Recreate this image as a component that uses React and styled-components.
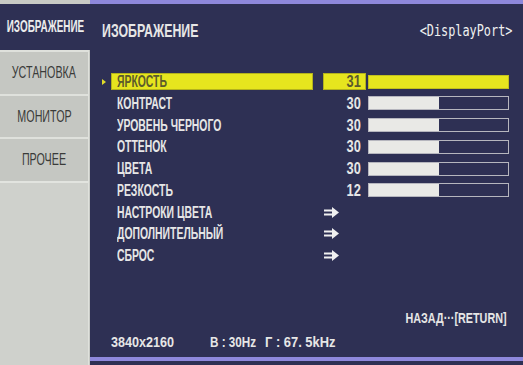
import React from "react";
import styled, { createGlobalStyle } from "styled-components";

const GlobalStyle = createGlobalStyle`
  html, body {
    margin: 0;
    padding: 0;
    background: #2e3054;
  }
  body {
    font-family: "Liberation Sans", Arial, sans-serif;
    font-weight: bold;
  }
`;

// OSD font is very condensed; squeeze a regular sans horizontally
const Txt = styled.span`
  display: inline-block;
  white-space: nowrap;
  transform: scaleX(${(p) => p.$sx || 0.65});
  transform-origin: ${(p) => p.$o || "left"} center;
`;

const Screen = styled.div`
  display: flex;
  width: 523px;
  height: 365px;
  overflow: hidden;
`;

const Sidebar = styled.div`
  width: 90px;
  display: flex;
  flex-direction: column;
  background: #c8cac5;
  padding-top: 4px;
  box-sizing: border-box;
`;

const Tab = styled.div`
  height: ${(p) => p.$h}px;
  display: flex;
  align-items: center;
  justify-content: center;
  font-size: 16px;
  font-weight: ${(p) => (p.$active ? "bold" : "normal")};
  color: ${(p) => (p.$active ? "#ececec" : "#3a3b39")};
  background: ${(p) => (p.$active ? "#2e3054" : "#c5c7c2")};
  border-top: ${(p) => (p.$active ? "none" : "2px solid #dfe1dc")};
  border-right: ${(p) => (p.$active ? "none" : "1px solid #dfe1dc")};
  margin-right: ${(p) => (p.$active ? "0" : "1px")};
  box-sizing: border-box;
`;

const SidebarFill = styled.div`
  flex: 1;
  background: #cfd1cc;
  border-top: 2px solid #e2e4df;
  border-right: 1px solid #dfe1dc;
  margin-right: 1px;
`;

const Panel = styled.div`
  flex: 1;
  display: flex;
  flex-direction: column;
  background: #2e3054;
  border-top: 4px solid #8e88dc;
  height: 361px;
  border-bottom: 4px solid #8e88dc;
  box-sizing: border-box;
  margin-bottom: 4px;
  padding: 18px 12px 0 12px;
  color: #e6e6e6;
`;

const Header = styled.div`
  display: flex;
  justify-content: space-between;
  align-items: flex-start;
  height: 51px;
`;

const Title = styled.div`
  font-size: 19px;
  line-height: 18px;
`;

const Source = styled.div`
  font-family: "DejaVu Sans Mono", "Liberation Mono", monospace;
  font-weight: normal;
  font-size: 15px;
  line-height: 18px;
  margin-right: -1px;
  color: #f0f0f0;
`;

const List = styled.div`
  display: flex;
  flex-direction: column;
  gap: 4.75px;
`;

const Row = styled.div`
  display: grid;
  grid-template-columns: 9px 202px 53px 143px;
  height: 17px;
  align-items: center;
`;

const Marker = styled.div`
  width: 0;
  height: 0;
  border-top: 3.5px solid transparent;
  border-bottom: 3.5px solid transparent;
  border-left: 4px solid #e0dc2a;
  visibility: ${(p) => (p.$show ? "visible" : "hidden")};
`;

const Label = styled.div`
  height: 17px;
  line-height: 15px;
  font-size: 16px;
  padding-left: 5px;
  box-sizing: border-box;
  color: ${(p) => (p.$sel ? "#5c5b2c" : "#e6e6e6")};
  background: ${(p) => (p.$sel ? "#e6e51e" : "transparent")};
  border: 1px solid ${(p) => (p.$sel ? "#b3b21c" : "transparent")};
`;

const Value = styled.div`
  margin-left: 10px;
  height: 17px;
  line-height: 15px;
  font-size: 16px;
  padding-right: 4px;
  box-sizing: border-box;
  color: ${(p) => (p.$sel ? "#5c5b2c" : "#e6e6e6")};
  background: ${(p) => (p.$sel ? "#e6e51e" : "transparent")};
  border: 1px solid ${(p) => (p.$sel ? "#b3b21c" : "transparent")};
  display: flex;
  align-items: center;
  justify-content: ${(p) => (p.$arrow ? "flex-start" : "flex-end")};
`;

const Bar = styled.div`
  margin-left: 2px;
  height: 14px;
  box-sizing: border-box;
  border: 1px solid ${(p) => (p.$sel ? "#c2c01e" : "#b6b6be")};
  background: ${(p) => (p.$sel ? "#e6e51e" : "#2e3054")};
  display: flex;
`;

const BarFill = styled.div`
  background: #e9e9e6;
  height: 100%;
`;

const Footer = styled.div`
  margin-top: auto;
  display: flex;
  flex-direction: column;
  font-size: 15px;
  padding-bottom: 7px;
`;

const BackHint = styled.div`
  align-self: flex-end;
  margin-right: 4px;
  line-height: 17px;
  margin-bottom: 7px;
`;

const Info = styled.div`
  display: flex;
  line-height: 17px;
  padding-left: 9px;
`;

const InfoItem = styled.div`
  width: ${(p) => p.$w}px;
`;

const ArrowIcon = () => (
  <svg width="15" height="11" viewBox="0 0 15 11">
    <rect x="0" y="2.5" width="9" height="2" fill="#f0f0f0" />
    <rect x="0" y="6.5" width="9" height="2" fill="#f0f0f0" />
    <polygon points="8,0 15,5.5 8,11" fill="#f0f0f0" />
  </svg>
);

const rows = [
  { label: "ЯРКОСТЬ", value: 31, fill: 100, sel: true },
  { label: "КОНТРАСТ", value: 30, fill: 50 },
  { label: "УРОВЕНЬ ЧЕРНОГО", value: 30, fill: 50 },
  { label: "ОТТЕНОК", value: 30, fill: 50 },
  { label: "ЦВЕТА", value: 30, fill: 50 },
  { label: "РЕЗКОСТЬ", value: 12, fill: 50 },
  { label: "НАСТРОКИ ЦВЕТА", arrow: true },
  { label: "ДОПОЛНИТЕЛЬНЫЙ", arrow: true },
  { label: "СБРОС", arrow: true },
];

const tabs = [
  { name: "ИЗОБРАЖЕНИЕ", h: 46, active: true },
  { name: "УСТАНОВКА", h: 44 },
  { name: "МОНИТОР", h: 43 },
  { name: "ПРОЧЕЕ", h: 44 },
];

export default function App() {
  return (
    <>
      <GlobalStyle />
      <Screen>
        <Sidebar>
          {tabs.map((t) => (
            <Tab key={t.name} $active={t.active} $h={t.h}>
              <Txt $o="center" $sx={t.active ? 0.62 : 0.67}>
                {t.name}
              </Txt>
            </Tab>
          ))}
          <SidebarFill />
        </Sidebar>
        <Panel>
          <Header>
            <Title>
              <Txt $sx={0.65}>ИЗОБРАЖЕНИЕ</Txt>
            </Title>
            <Source>
              <Txt $o="right" $sx={0.79}>&lt;DisplayPort&gt;</Txt>
            </Source>
          </Header>
          <List>
            {rows.map((r) => (
              <Row key={r.label}>
                <Marker $show={r.sel} />
                <Label $sel={r.sel}>
                  <Txt>{r.label}</Txt>
                </Label>
                {r.arrow ? (
                  <Value $arrow>
                    <ArrowIcon />
                  </Value>
                ) : (
                  <Value $sel={r.sel}>
                    <Txt $o="right" $sx={0.8}>{r.value}</Txt>
                  </Value>
                )}
                {r.arrow ? (
                  <div />
                ) : (
                  <Bar $sel={r.sel}>
                    {!r.sel && <BarFill style={{ width: `${r.fill}%` }} />}
                  </Bar>
                )}
              </Row>
            ))}
          </List>
          <Footer>
            <BackHint>
              <Txt $o="right" $sx={0.72}>НАЗАД···[RETURN]</Txt>
            </BackHint>
            <Info>
              <InfoItem $w={99}>
                <Txt $sx={0.84}>3840x2160</Txt>
              </InfoItem>
              <InfoItem $w={55}>
                <Txt $sx={0.78}>В : 30Hz</Txt>
              </InfoItem>
              <InfoItem $w={90}>
                <Txt $sx={0.86}>Г : 67. 5kHz</Txt>
              </InfoItem>
            </Info>
          </Footer>
        </Panel>
      </Screen>
    </>
  );
}
